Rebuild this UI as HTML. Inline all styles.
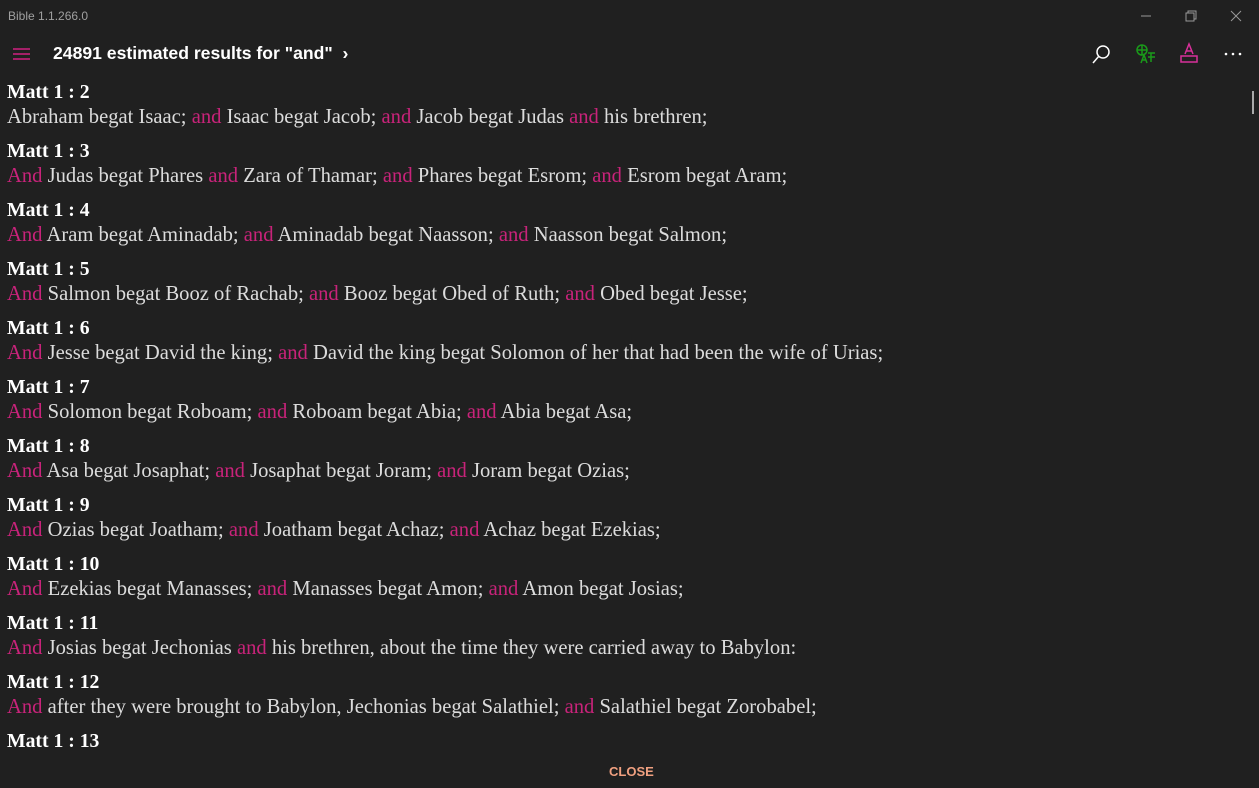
<!DOCTYPE html>
<html><head><meta charset="utf-8"><style>
body{margin:0;width:1259px;height:787px;background:#202020;overflow:hidden;font-family:"Liberation Serif",serif;color:#dcdcdc;position:relative}
.title{position:absolute;left:8px;top:9px;font:12px "Liberation Sans",sans-serif;color:#a0a0a0}
.hdr{position:absolute;left:53px;top:43px;font:bold 17.6px "Liberation Sans",sans-serif;color:#fff}
.list{position:absolute;left:7px;top:80px}
.b{height:59px}
h3{margin:0;font-size:19.7px;font-weight:bold;color:#fff;height:25px;line-height:25px}
p{margin:0;font-size:20.6px;line-height:25px;white-space:nowrap}
i{font-style:normal;color:#c8237a}
.close{position:absolute;left:609px;top:764px;font:bold 13px "Liberation Sans",sans-serif;color:#f0a080}
</style></head><body>
<div class="title">Bible 1.1.266.0</div>
<svg style="position:absolute;left:1135px;top:8px" width="115" height="16" fill="none" stroke="#999" stroke-width="1">
<line x1="6" y1="8" x2="16" y2="8"/><rect x="51" y="5" width="8" height="8"/><path d="M53 5V3h8v8h-2"/><path d="M96 3l10 10M106 3l-10 10"/></svg>
<svg style="position:absolute;left:13px;top:47px" width="18" height="14" stroke="#d02080" stroke-width="1.5"><line x1="0" y1="2" x2="17" y2="2"/><line x1="0" y1="7" x2="17" y2="7"/><line x1="0" y1="12" x2="17" y2="12"/></svg>
<div class="hdr">24891 estimated results for "and" &nbsp;›</div>
<svg style="position:absolute;left:1090px;top:42px" width="160" height="24" fill="none" stroke-width="1.5">
<circle cx="13" cy="10" r="6" stroke="#fff"/><line x1="9" y1="14" x2="3" y2="21" stroke="#fff"/>
<g stroke="#1a9a1a"><circle cx="52" cy="8" r="5"/><line x1="47" y1="8" x2="57" y2="8"/><line x1="52" y1="3" x2="52" y2="13"/><path d="M51 21l3-8 3 8M52 18h4M58 11h7M61 11v9M58 15h7"/></g>
<g stroke="#d8309a"><path d="M95 12l4-10 4 10M96 9h6"/><rect x="91" y="14" width="16" height="6"/></g>
<g fill="#fff" stroke="none"><circle cx="136" cy="12" r="1.3"/><circle cx="143" cy="12" r="1.3"/><circle cx="150" cy="12" r="1.3"/></g>
</svg>
<div style="position:absolute;left:1252px;top:91px;width:2px;height:23px;background:#aaa"></div>
<div class="list">
<div class="b"><h3>Matt 1 : 2</h3><p>Abraham begat Isaac; <i>and</i> Isaac begat Jacob; <i>and</i> Jacob begat Judas <i>and</i> his brethren;</p></div>
<div class="b"><h3>Matt 1 : 3</h3><p><i>And</i> Judas begat Phares <i>and</i> Zara of Thamar; <i>and</i> Phares begat Esrom; <i>and</i> Esrom begat Aram;</p></div>
<div class="b"><h3>Matt 1 : 4</h3><p><i>And</i> Aram begat Aminadab; <i>and</i> Aminadab begat Naasson; <i>and</i> Naasson begat Salmon;</p></div>
<div class="b"><h3>Matt 1 : 5</h3><p><i>And</i> Salmon begat Booz of Rachab; <i>and</i> Booz begat Obed of Ruth; <i>and</i> Obed begat Jesse;</p></div>
<div class="b"><h3>Matt 1 : 6</h3><p><i>And</i> Jesse begat David the king; <i>and</i> David the king begat Solomon of her that had been the wife of Urias;</p></div>
<div class="b"><h3>Matt 1 : 7</h3><p><i>And</i> Solomon begat Roboam; <i>and</i> Roboam begat Abia; <i>and</i> Abia begat Asa;</p></div>
<div class="b"><h3>Matt 1 : 8</h3><p><i>And</i> Asa begat Josaphat; <i>and</i> Josaphat begat Joram; <i>and</i> Joram begat Ozias;</p></div>
<div class="b"><h3>Matt 1 : 9</h3><p><i>And</i> Ozias begat Joatham; <i>and</i> Joatham begat Achaz; <i>and</i> Achaz begat Ezekias;</p></div>
<div class="b"><h3>Matt 1 : 10</h3><p><i>And</i> Ezekias begat Manasses; <i>and</i> Manasses begat Amon; <i>and</i> Amon begat Josias;</p></div>
<div class="b"><h3>Matt 1 : 11</h3><p><i>And</i> Josias begat Jechonias <i>and</i> his brethren, about the time they were carried away to Babylon:</p></div>
<div class="b"><h3>Matt 1 : 12</h3><p><i>And</i> after they were brought to Babylon, Jechonias begat Salathiel; <i>and</i> Salathiel begat Zorobabel;</p></div>
<div class="b"><h3>Matt 1 : 13</h3></div>
</div>
<div class="close">CLOSE</div>
</body></html>
